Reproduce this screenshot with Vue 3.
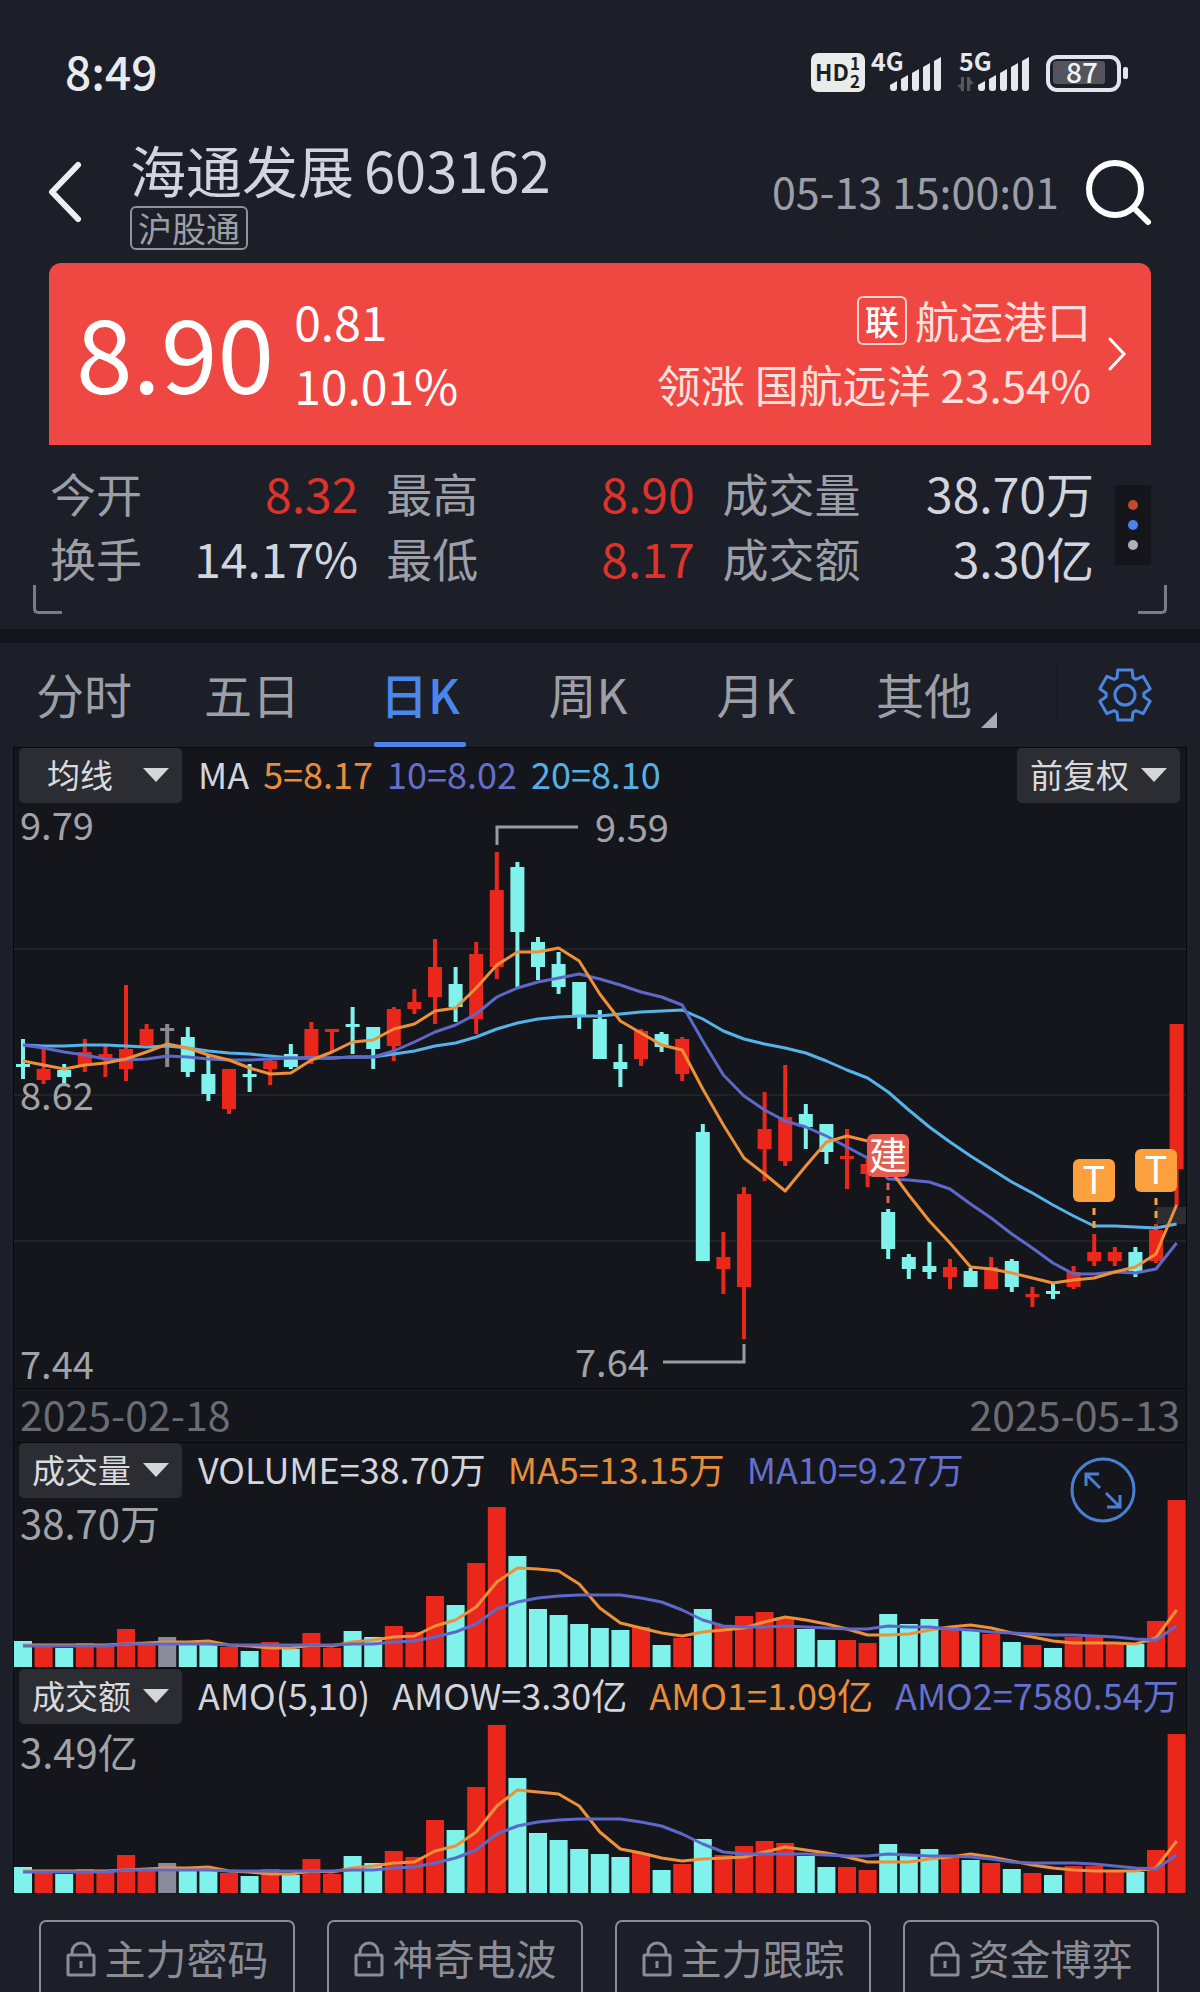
<template>
  <div class="app">
    <div class="status">
      <span class="clock">8:49</span>
      <svg class="status-icons" width="320" height="60" viewBox="810 43 320 60" aria-hidden="true">
        <rect x="811" y="53" width="54" height="39" rx="7" fill="#e9ece9" />
        <text x="815" y="81" font-size="23" font-weight="700" fill="#1c1f25">HD</text>
        <text x="850" y="70" font-size="17" font-weight="700" fill="#1c1f25">1</text>
        <text x="850" y="88" font-size="17" font-weight="700" fill="#1c1f25">2</text>
        <text x="871" y="71" font-size="25" font-weight="700" fill="#e6e8ee">4G</text>
        <text x="959" y="71" font-size="25" font-weight="700" fill="#e6e8ee">5G</text>
        <g v-for="x in [890, 978]" :key="x" fill="#e6e8ee">
          <path
            v-for="(top, i) in [81, 75, 69, 63, 57]"
            :key="top"
            :d="`M${x + i * 11} ${top + 4}l7-4V88q0 3-3 3h-1q-3 0-3-3z`"
          />
        </g>
        <path d="M964 77v14h-3q0-4-4-5l4-2v-7zM967 91V77h3q0 4 4 6l-4 2v6z" fill="#56585d" />
        <rect x="1053" y="61" width="52" height="23" rx="3" fill="#53545c" />
        <rect x="1048" y="57" width="71" height="33" rx="9" fill="none" stroke="#e2e4ee" stroke-width="4" />
        <rect x="1123" y="67" width="5" height="12" rx="2" fill="#e2e4ee" />
        <text x="1082" y="83" font-size="28" font-weight="500" text-anchor="middle" fill="#f1f2f6">87</text>
      </svg>
    </div>

    <header class="header">
      <button class="icon-btn back" aria-label="返回">
        <svg width="34" height="68" viewBox="0 0 34 68">
          <path d="M30 7 4 34l26 27" fill="none" stroke="#eceef2" stroke-width="6" stroke-linecap="round" stroke-linejoin="round" />
        </svg>
      </button>
      <div class="title">
        <h1>海通发展<span>603162</span></h1>
        <span class="tag">沪股通</span>
      </div>
      <time class="time">05-13 15:00:01</time>
      <button class="icon-btn" aria-label="搜索">
        <svg width="66" height="66" viewBox="0 0 66 66">
          <circle cx="29" cy="30" r="26" fill="none" stroke="#fff" stroke-width="6" />
          <path d="m48 49 14 14" stroke="#fff" stroke-width="6" stroke-linecap="round" />
        </svg>
      </button>
    </header>

    <section class="quote">
      <strong class="price">8.90</strong>
      <div class="change">
        <span>0.81</span>
        <span>10.01%</span>
      </div>
      <a href="#sector" class="sector">
        <span class="sector-text">
          <span class="sector-name"><i>联</i>航运港口</span>
          <span>领涨 国航远洋 23.54%</span>
        </span>
        <svg width="20" height="36" viewBox="0 0 20 36">
          <path d="m3 3 14 15L3 33" fill="none" stroke="#fff" stroke-width="3" stroke-linecap="round" />
        </svg>
      </a>
    </section>

    <section class="stats">
      <dl>
        <div v-for="item in stats" :key="item.label">
          <dt>{{ item.label }}</dt>
          <dd :class="{ up: item.up }">{{ item.value }}</dd>
        </div>
      </dl>
      <button class="more" aria-label="更多">
        <span></span>
        <span></span>
        <span></span>
      </button>
    </section>

    <nav class="tabs">
      <button
        v-for="tab in tabs"
        :key="tab"
        :class="{ active: tab === activeTab, other: tab === '其他' }"
        @click="activeTab = tab"
      >
        {{ tab }}
      </button>
      <button class="settings" aria-label="设置">
        <svg width="56" height="56" viewBox="0 0 56 56" fill="none" stroke="#4a86e0" stroke-width="3" stroke-linejoin="round">
          <path :d="gearPath" />
          <circle cx="28" cy="28" r="10" />
        </svg>
      </button>
    </nav>

    <main class="charts">
      <div class="row">
        <span class="picker">
          <select v-model="indicator" class="wide" aria-label="指标">
            <option>均线</option>
          </select>
        </span>
        <div class="legend tight">
          <span>MA</span>
          <span class="ma5">5=8.17</span>
          <span class="ma10">10=8.02</span>
          <span class="ma20">20=8.10</span>
        </div>
        <span class="picker right">
          <select v-model="adjust" aria-label="复权">
            <option>前复权</option>
          </select>
        </span>
      </div>

      <svg class="plot" viewBox="14 802 1172 585">
        <path d="M14 948H1186M14 1094H1186M14 1240H1186" stroke="#202228" stroke-width="2" />
        <rect x="1156" y="1206" width="30" height="17" fill="#2d2e32" />
        <g v-for="(c, i) in candles" :key="i" :fill="colors[c[0]]">
          <rect :x="xAt(i) - 2" :y="c[1]" width="4" :height="c[4] - c[1]" />
          <rect :x="xAt(i) - 7" :y="c[2]" width="14" :height="c[3] - c[2]" />
        </g>
        <polyline class="line ma20" :points="pricePoints(ma20)" />
        <polyline class="line ma10" :points="pricePoints(ma10)" />
        <polyline class="line ma5" :points="pricePoints(ma5)" />

        <g fill="none" stroke="#9b9ca1" stroke-width="3">
          <path d="M497 844V826H578" />
          <path d="M663 1361H744V1343" />
        </g>
        <g class="axis">
          <text x="20" y="839">9.79</text>
          <text x="20" y="1109">8.62</text>
          <text x="20" y="1378">7.44</text>
          <text x="595" y="841">9.59</text>
          <text x="575" y="1376">7.64</text>
        </g>
        <g v-for="m in marks" :key="m.x">
          <path :d="`M${m.x} ${m.y + 49}v20`" :stroke="m.color" stroke-width="3" stroke-dasharray="7 6" />
          <rect :x="m.x - 21" :y="m.y" width="42" height="43" rx="6" :fill="m.color" />
          <text :x="m.x" :y="m.y + 35" class="mark">{{ m.text }}</text>
        </g>
      </svg>

      <div class="dates">
        <span>2025-02-18</span>
        <span>2025-05-13</span>
      </div>

      <section v-for="panel in panels" :key="panel.name" class="panel">
        <div class="row">
          <span class="picker">
            <select :aria-label="panel.name">
              <option>{{ panel.name }}</option>
            </select>
          </span>
          <div class="legend">
            <span v-for="l in panel.legend" :key="l[0]" :class="l[1]">{{ l[0] }}</span>
          </div>
        </div>
        <svg class="plot" viewBox="14 0 1172 170">
          <rect
            v-for="(h, i) in panel.bars"
            :key="i"
            :x="xAt(i) - 9"
            :y="169 - h"
            width="18"
            :height="h"
            :fill="i === 7 ? '#8a8c9c' : colors[candles[i][0]]"
          />
          <polyline class="line ma5" :points="barPoints(panel.ma5)" />
          <polyline class="line ma10" :points="barPoints(panel.ma10)" />
          <text x="20" :y="panel.labelY" class="volume-label">{{ panel.max }}</text>
        </svg>
        <button v-if="panel.expand" class="icon-btn expand" aria-label="全屏">
          <svg width="66" height="66" viewBox="0 0 66 66" fill="none" stroke="#4a80d4" stroke-width="3">
            <circle cx="33" cy="33" r="31" />
            <path d="M16 29V17h13M17 18l13 13M50 38v12H37M49 49 36 36" />
          </svg>
        </button>
      </section>
    </main>

    <footer class="locked">
      <button v-for="name in locked" :key="name">
        <svg width="30" height="36" viewBox="0 0 30 36" fill="none" stroke="#8b8c96" stroke-width="3">
          <rect x="2" y="14" width="26" height="20" rx="1" />
          <path d="M6 14v-3a9 9 0 0 1 18 0v3M15 20v7" />
        </svg>
        <span>{{ name }}</span>
      </button>
    </footer>
  </div>
</template>

<script setup>
import { ref } from "vue";

const activeTab = ref("日K");
const indicator = ref("均线");
const adjust = ref("前复权");

const tabs = ["分时", "五日", "日K", "周K", "月K", "其他"];
const locked = ["主力密码", "神奇电波", "主力跟踪", "资金博弈"];

const stats = [
  { label: "今开", value: "8.32", up: true },
  { label: "最高", value: "8.90", up: true },
  { label: "成交量", value: "38.70万" },
  { label: "换手", value: "14.17%" },
  { label: "最低", value: "8.17", up: true },
  { label: "成交额", value: "3.30亿" },
];

const colors = { r: "#eb271b", c: "#7ff2ec", g: "#8a8b92" };

// direction, high, body top, body bottom, low
const candles = [
  ["c", 1038, 1063, 1066, 1078], ["r", 1048, 1068, 1079, 1083], ["c", 1063, 1069, 1076, 1082],
  ["r", 1038, 1051, 1064, 1071], ["r", 1045, 1053, 1057, 1076], ["r", 984, 1048, 1068, 1080],
  ["r", 1023, 1028, 1044, 1044], ["g", 1023, 1027, 1030, 1066], ["c", 1026, 1036, 1071, 1076],
  ["c", 1053, 1073, 1093, 1100], ["r", 1068, 1068, 1108, 1113], ["c", 1063, 1073, 1076, 1091],
  ["r", 1058, 1060, 1068, 1084], ["c", 1043, 1053, 1066, 1068], ["r", 1021, 1028, 1056, 1063],
  ["r", 1028, 1028, 1031, 1050], ["c", 1006, 1023, 1026, 1053], ["c", 1026, 1026, 1048, 1068],
  ["r", 1006, 1008, 1045, 1060], ["r", 988, 1001, 1008, 1013], ["r", 938, 966, 996, 1023],
  ["c", 966, 983, 1006, 1021], ["r", 941, 953, 1018, 1033], ["r", 851, 889, 966, 978],
  ["c", 861, 866, 931, 986], ["c", 936, 941, 966, 979], ["c", 951, 963, 986, 993],
  ["c", 981, 981, 1015, 1028], ["c", 1009, 1018, 1058, 1058], ["c", 1043, 1061, 1068, 1086],
  ["r", 1028, 1030, 1058, 1065], ["c", 1031, 1033, 1046, 1051], ["r", 1036, 1038, 1073, 1080],
  ["c", 1123, 1131, 1260, 1260], ["r", 1231, 1256, 1268, 1293], ["r", 1186, 1193, 1286, 1338],
  ["r", 1091, 1128, 1148, 1180], ["r", 1064, 1116, 1160, 1165], ["c", 1103, 1113, 1126, 1148],
  ["c", 1123, 1123, 1151, 1163], ["r", 1128, 1155, 1158, 1188], ["r", 1158, 1163, 1173, 1186],
  ["c", 1208, 1211, 1248, 1258], ["c", 1253, 1256, 1268, 1278], ["c", 1241, 1265, 1271, 1278],
  ["r", 1258, 1266, 1276, 1288], ["c", 1267, 1270, 1286, 1286], ["r", 1256, 1266, 1288, 1288],
  ["c", 1258, 1260, 1286, 1291], ["r", 1286, 1293, 1296, 1306], ["c", 1283, 1290, 1293, 1298],
  ["r", 1265, 1271, 1286, 1288], ["r", 1233, 1251, 1260, 1265], ["r", 1246, 1251, 1260, 1265],
  ["c", 1246, 1251, 1270, 1276], ["r", 1223, 1229, 1260, 1262], ["r", 1023, 1023, 1168, 1205],
];

const ma5 = [
  1060, 1064, 1068, 1064, 1062, 1058, 1051, 1043, 1047, 1054, 1059, 1067, 1073, 1072, 1059, 1051, 1041, 1039, 1028,
  1023, 1010, 1007, 987, 964, 951, 951, 947, 960, 993, 1020, 1032, 1044, 1049, 1088, 1124, 1157, 1173, 1190, 1165,
  1141, 1135, 1140, 1166, 1194, 1220, 1242, 1266, 1268, 1272, 1277, 1282, 1279, 1277, 1271, 1266, 1253, 1204,
];
const ma10 = [
  1044, 1047, 1051, 1054, 1058, 1059, 1058, 1055, 1056, 1058, 1059, 1059, 1058, 1057, 1057, 1057, 1056, 1056, 1050,
  1041, 1031, 1024, 1013, 996, 987, 981, 977, 973, 978, 984, 991, 996, 1004, 1040, 1074, 1095, 1109, 1120, 1126,
  1135, 1146, 1157, 1178, 1179, 1181, 1188, 1203, 1217, 1233, 1247, 1262, 1273, 1273, 1271, 1272, 1268, 1242,
];
const ma20 = [
  1044, 1045, 1045, 1044, 1044, 1045, 1046, 1045, 1047, 1050, 1052, 1053, 1055, 1057, 1057, 1057, 1056, 1056, 1053,
  1050, 1045, 1042, 1036, 1028, 1022, 1018, 1016, 1015, 1015, 1013, 1011, 1010, 1009, 1018, 1030, 1038, 1043, 1047,
  1052, 1060, 1069, 1077, 1091, 1109, 1126, 1141, 1155, 1168, 1181, 1192, 1204, 1215, 1225, 1225, 1226, 1227, 1223,
];

const marks = [
  { x: 888, y: 1133, text: "建", color: "#e65b50" },
  { x: 1094, y: 1158, text: "T", color: "#fba03c" },
  { x: 1156, y: 1148, text: "T", color: "#fba03c" },
];

const panels = [
  {
    name: "成交量",
    max: "38.70万",
    labelY: 41,
    expand: true,
    legend: [["VOLUME=38.70万", ""], ["MA5=13.15万", "ma5"], ["MA10=9.27万", "ma10"]],
    bars: [
      26, 22, 19, 24, 21, 38, 22, 30, 23, 23, 20, 16, 25, 18, 34, 19, 36, 30, 41, 35, 71, 62, 104, 160, 111, 58, 52,
      43, 39, 37, 40, 22, 29, 58, 42, 51, 55, 50, 38, 27, 27, 24, 53, 43, 48, 37, 36, 33, 25, 22, 19, 30, 30, 23, 23,
      46, 167,
    ],
    ma5: [
      22, 22, 22, 22, 22, 23, 24, 25, 25, 26, 22, 21, 19, 19, 22, 21, 25, 27, 30, 31, 41, 47, 60, 85, 99, 98, 96, 83,
      59, 44, 39, 34, 31, 35, 37, 39, 45, 50, 47, 43, 38, 32, 32, 33, 37, 40, 42, 39, 34, 30, 26, 24, 24, 24, 23, 29,
      57,
    ],
    ma10: [
      21, 21, 21, 21, 21, 23, 23, 23, 23, 23, 22, 22, 22, 22, 22, 22, 23, 23, 25, 26, 30, 35, 43, 58, 65, 69, 71, 72,
      72, 72, 69, 65, 57, 47, 41, 40, 40, 41, 40, 39, 38, 38, 41, 40, 40, 38, 37, 35, 34, 33, 32, 32, 31, 30, 28, 27,
      41,
    ],
  },
  {
    name: "成交额",
    max: "3.49亿",
    labelY: 44,
    legend: [["AMO(5,10)", ""], ["AMOW=3.30亿", ""], ["AMO1=1.09亿", "ma5"], ["AMO2=7580.54万", "ma10"]],
    bars: [
      26, 22, 19, 24, 21, 38, 22, 30, 23, 23, 20, 17, 24, 18, 34, 19, 37, 30, 42, 36, 73, 63, 106, 168, 115, 60, 53,
      44, 39, 36, 40, 23, 29, 54, 38, 47, 52, 50, 37, 26, 26, 23, 49, 39, 44, 35, 33, 30, 24, 20, 18, 27, 27, 21, 21,
      43, 159,
    ],
    ma5: [
      22, 22, 22, 22, 22, 23, 24, 25, 25, 26, 22, 21, 19, 19, 22, 21, 25, 27, 30, 31, 42, 47, 61, 87, 103, 101, 99,
      87, 61, 44, 40, 35, 32, 34, 35, 36, 41, 46, 43, 40, 36, 31, 31, 31, 34, 36, 39, 36, 32, 28, 25, 23, 22, 22, 22,
      25, 52,
    ],
    ma10: [
      21, 21, 21, 21, 21, 23, 23, 23, 23, 23, 22, 22, 22, 22, 22, 22, 23, 23, 25, 26, 30, 35, 43, 59, 67, 71, 73, 74,
      74, 74, 71, 67, 59, 49, 41, 39, 39, 39, 39, 38, 37, 37, 39, 38, 37, 37, 36, 34, 31, 30, 30, 30, 29, 27, 25, 24,
      38,
    ],
  },
];

const xAt = (i) => 23 + i * 20.6;
const pricePoints = (list) => list.map((y, i) => `${xAt(i)},${y}`).join(" ");
const barPoints = (list) => list.map((h, i) => `${xAt(i)},${169 - h}`).join(" ");

// six-toothed gear outline
const gearPath =
  Array.from({ length: 6 }, (_, i) =>
    [[-25, 19], [-16, 26], [16, 26], [25, 19]].map(([deg, r]) => {
      const a = ((i * 60 + deg) * Math.PI) / 180;
      return `${(28 + r * Math.sin(a)).toFixed(1)} ${(28 - r * Math.cos(a)).toFixed(1)}`;
    })
  )
    .flat()
    .map((p, i) => (i ? "L" : "M") + p)
    .join("") + "Z";
</script>

<style>
body {
  margin: 0;
  background: #1c1f27;
}
</style>

<style scoped>
.app {
  height: 100vh;
  overflow: hidden;
  background: #1c1f27;
  color: #d3d5de;
  font-family: "Noto Sans CJK SC", "Noto Sans", sans-serif;
}

button,
select {
  padding: 0;
  border: none;
  background: none;
  color: inherit;
  font-family: inherit;
  cursor: pointer;
}

svg {
  display: block;
  overflow: visible;
}

.status {
  display: flex;
  justify-content: space-between;
  padding: 43px 70px 17px 65px;
}

.clock {
  font-size: 46px;
  line-height: 54px;
  font-weight: 500;
  color: #e8ebee;
}

.header {
  display: flex;
  align-items: center;
  height: 143px;
  padding: 0 48px;
}

.back {
  margin-right: 48px;
}

.title {
  flex: 1;
  padding-top: 4px;
}

h1 {
  margin: 0 0 6px;
  font-size: 56px;
  line-height: 62px;
  font-weight: 400;
}

h1 span {
  margin-left: 10px;
}

.tag {
  display: inline-block;
  padding: 0 6px;
  border: 2px solid #8f919b;
  border-radius: 6px;
  font-size: 34px;
  line-height: 40px;
  color: #9d9fa8;
  vertical-align: top;
}

.time {
  margin-right: 27px;
  padding-bottom: 4px;
  font-size: 43px;
  color: #9d9fa8;
}

.quote {
  display: flex;
  align-items: center;
  margin: 0 49px;
  height: 182px;
  padding: 0 24px 0 27px;
  border-radius: 12px 12px 0 0;
  background: #ef4843;
  color: #fff;
}

.price {
  padding-bottom: 8px;
  font-size: 102px;
  line-height: 128px;
  font-weight: 400;
}

.change,
.sector-text {
  display: flex;
  flex-direction: column;
  padding-bottom: 4px;
  font-size: 48px;
  line-height: 64px;
}

.change {
  margin-left: 20px;
}

.sector {
  display: flex;
  align-items: center;
  gap: 16px;
  margin-left: auto;
  color: #ffe0dc;
  text-decoration: none;
}

.sector-text {
  align-items: flex-end;
  font-size: 44px;
}

.sector-name {
  display: flex;
  align-items: center;
  gap: 8px;
}

.sector-name i {
  width: 46px;
  border: 2px solid #ffd3cf;
  border-radius: 6px;
  font-size: 34px;
  line-height: 45px;
  font-style: normal;
  font-weight: 500;
  text-align: center;
  color: #fff;
}

.stats {
  position: relative;
  display: flex;
  align-items: center;
  gap: 21px;
  padding: 15px 49px 39px 50px;
  border-bottom: 14px solid #13161d;
}

.stats::before,
.stats::after {
  content: "";
  position: absolute;
  bottom: 15px;
  left: 33px;
  width: 26px;
  height: 26px;
  border: solid #7b7d86;
  border-width: 0 0 3px 3px;
  border-radius: 0 0 0 5px;
}

.stats::after {
  left: auto;
  right: 33px;
  border-width: 0 3px 3px 0;
  border-radius: 0 0 5px 0;
}

dl {
  flex: 1;
  display: grid;
  grid-template-columns: 308fr 308fr 371fr;
  column-gap: 28px;
  margin: 0;
}

dl div {
  display: flex;
  justify-content: space-between;
  line-height: 65px;
}

dt {
  font-size: 46px;
  color: #9d9fa8;
}

dd {
  margin: 0;
  font-size: 48px;
}

dd.up {
  color: #dc332b;
}

.more {
  display: flex;
  flex-direction: column;
  align-items: center;
  justify-content: center;
  gap: 10px;
  width: 36px;
  height: 80px;
  background: #14161c;
}

.more span {
  width: 10px;
  height: 10px;
  border-radius: 50%;
  background: #c4482f;
}

.more span:nth-child(2) {
  background: #4a82ee;
}

.more span:nth-child(3) {
  background: #aeb0b7;
}

.tabs {
  display: grid;
  grid-template-columns: repeat(6, 14%) 1fr;
  height: 104px;
}

.tabs button {
  position: relative;
  padding-bottom: 4px;
  font-size: 48px;
  color: #9d9fa8;
}

.tabs .active {
  color: #4a86ec;
  font-weight: 500;
}

.tabs .active::after {
  content: "";
  position: absolute;
  left: 50%;
  bottom: 0;
  width: 92px;
  height: 5px;
  margin-left: -46px;
  border-radius: 2px;
  background: #4a86ec;
}

.tabs .other::after {
  content: "";
  position: absolute;
  right: 11px;
  bottom: 19px;
  border: solid transparent;
  border-width: 16px 0 0 16px;
  border-bottom: 0;
  border-right: 16px solid #a9abb3;
  border-left: 0;
}

.tabs .settings {
  display: flex;
  align-items: center;
  justify-content: center;
  align-self: center;
  height: 56px;
  margin-left: 48px;
  padding: 0 8px 0 0;
  border-left: 2px solid #171a20;
}

.charts {
  margin: 0 13px;
  border: solid #08090c;
  border-width: 1px 1px 0;
  background: #15161b;
}

.row {
  display: flex;
  align-items: flex-start;
  height: 55px;
  padding: 0 6px 0 5px;
}

.picker {
  position: relative;
}

.picker.right {
  margin-left: auto;
}

.picker::after {
  content: "";
  position: absolute;
  right: 13px;
  top: 20px;
  border: solid transparent;
  border-width: 14px 13px 0;
  border-top-color: #d5d6d8;
  pointer-events: none;
}

select {
  display: block;
  width: 163px;
  height: 55px;
  padding: 0 0 4px 13px;
  border-radius: 5px;
  background: #2b2d32;
  color: #d9dade;
  font-size: 33px;
  appearance: none;
}

select.wide {
  padding-left: 28px;
}

.legend {
  display: flex;
  gap: 22px;
  margin-left: 16px;
  font-size: 36px;
  line-height: 50px;
  white-space: nowrap;
}

.legend.tight {
  gap: 14px;
}

.legend .ma5 {
  color: #e78d3b;
}

.legend .ma10 {
  color: #6470cc;
}

.legend .ma20 {
  color: #55b0e6;
}

.plot {
  width: 100%;
  height: auto;
}

.line {
  fill: none;
  stroke-width: 3px;
  stroke-linejoin: round;
}

.line.ma5 {
  stroke: #ee9039;
}

.line.ma10 {
  stroke: #5e68c8;
}

.line.ma20 {
  stroke: #56b3ea;
}

.axis text {
  font-size: 38px;
  fill: #a2a3a8;
}

.volume-label {
  font-size: 40px;
  fill: #a2a3a8;
}

.mark {
  font-size: 38px;
  fill: #fff;
  text-anchor: middle;
}

.dates {
  display: flex;
  justify-content: space-between;
  padding: 0 6px 4px;
  border: solid #08090c;
  border-width: 1px 0;
  font-size: 41px;
  line-height: 49px;
  color: #6b6d76;
}

.panel {
  position: relative;
}

.panel + .panel {
  border-top: 1px solid #08090c;
}

.expand {
  position: absolute;
  right: 50px;
  top: 14px;
}

.locked {
  display: grid;
  grid-template-columns: repeat(4, 1fr);
  gap: 32px;
  padding: 26px 41px 0 39px;
}

.locked button {
  display: flex;
  align-items: center;
  justify-content: center;
  gap: 9px;
  height: 78px;
  border: 2px solid #8b8c96;
  border-radius: 7px;
  font-size: 41px;
  color: #8b8c96;
}

.locked span {
  padding-bottom: 4px;
}
</style>
